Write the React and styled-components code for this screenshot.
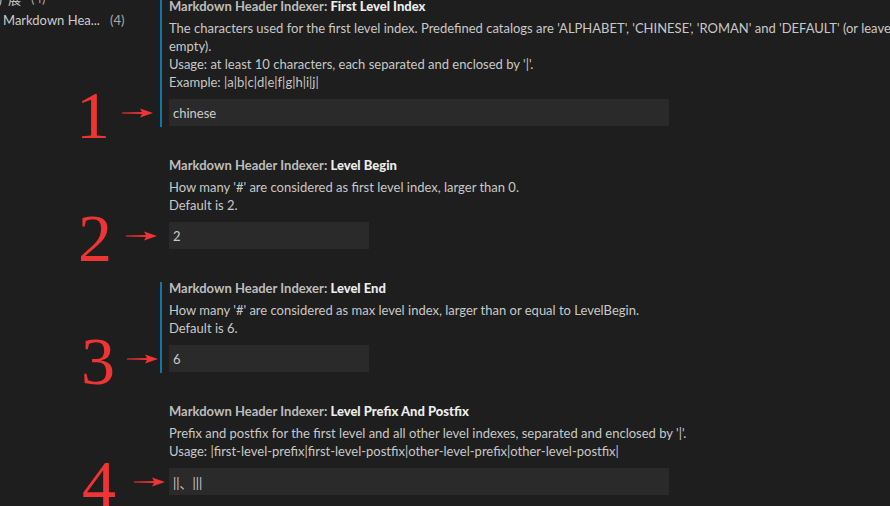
import styled, { createGlobalStyle } from "styled-components"

const GlobalStyle = createGlobalStyle`
    html, body {
        margin: 0;
        padding: 0;
        background: #1e1e1e;
        overflow: hidden;
    }
`

const Page = styled.div`
    display: flex;
    width: 890px;
    height: 506px;
    overflow: hidden;
    background: #1e1e1e;
    font-family: Lato, "Noto Sans", "Noto Sans CJK SC", sans-serif;
    font-size: 13px;
    color: #cccccc;
`

const Sidebar = styled.nav`
    display: flex;
    flex-direction: column;
    width: 160px;
    flex-shrink: 0;
    margin-top: -13px;
    overflow: hidden;
`

const TocItem = styled.div`
    display: flex;
    align-items: center;
    height: 22px;
    margin-left: ${p => p.$indent}px;
    color: #cccccc;
    white-space: nowrap;
`

const TocCount = styled.span`
    margin-left: 10px;
    color: #a8a8a8;
`

const Main = styled.main`
    display: flex;
    flex-direction: column;
    gap: 32px;
    flex: 1;
    min-width: 0;
`

const Setting = styled.section`
    display: flex;
    flex-direction: column;
    padding: 0 0 1px 7px;
    border-left: 2px solid ${p => (p.$active ? "#0f77b0" : "transparent")};
`

const Title = styled.div`
    height: 12px;
    line-height: 13px;
    font-weight: 700;
    color: #bdbdbd;
    white-space: nowrap;

    b {
        font-weight: 900;
        color: #ececec;
    }
`

const Description = styled.div`
    margin-top: 6px;
    line-height: 18px;
    padding-top: 1px;
    margin-bottom: -1px;
    color: #c8c8c8;
    white-space: nowrap;
`

const InputRow = styled.div`
    position: relative;
    margin-top: 9px;
`

const Input = styled.div`
    width: ${p => p.$width}px;
    height: 27px;
    box-sizing: border-box;
    padding: 1px 0 0 4px;
    display: flex;
    align-items: center;
    background: #2a2a2a;
    color: #cccccc;
    white-space: nowrap;
`

// red hand-drawn callouts laid over the screenshot
const Callout = styled.div`
    position: absolute;
    top: 50%;
    right: calc(100% + ${p => p.$offset}px);
    display: flex;
    align-items: center;
    gap: ${p => p.$gap}px;
    transform: translateY(-50%);
    pointer-events: none;
`

const Digit = styled.span`
    font-family: "Liberation Serif", serif;
    font-size: 68px;
    line-height: 1;
    color: #ef3434;
    margin-top: 4px;
`

function Arrow() {
    return (
        <svg width="31" height="12" viewBox="0 0 31 12">
            <path d="M0 5.4 L21 5 L21 7 L0 6.4 Z" fill="#ef3434" />
            <path d="M18 1.5 L31 6 L18 10.5 L20.5 6 Z" fill="#ef3434" />
        </svg>
    )
}

const settings = [
    {
        key: "First Level Index",
        lines: [
            "The characters used for the first level index. Predefined catalogs are 'ALPHABET', 'CHINESE', 'ROMAN' and 'DEFAULT' (or leave",
            "empty).",
            "Usage: at least 10 characters, each separated and enclosed by '|'.",
            "Example: |a|b|c|d|e|f|g|h|i|j|",
        ],
        value: "chinese",
        width: 500,
        active: true,
        num: "1",
        gap: 12,
        offset: 16,
    },
    {
        key: "Level Begin",
        lines: [
            "How many '#' are considered as first level index, larger than 0.",
            "Default is 2.",
        ],
        value: "2",
        width: 200,
        num: "2",
        gap: 14,
        offset: 12,
    },
    {
        key: "Level End",
        lines: [
            "How many '#' are considered as max level index, larger than or equal to LevelBegin.",
            "Default is 6.",
        ],
        value: "6",
        width: 200,
        active: true,
        num: "3",
        gap: 12,
        offset: 11,
    },
    {
        key: "Level Prefix And Postfix",
        lines: [
            "Prefix and postfix for the first level and all other level indexes, separated and enclosed by '|'.",
            "Usage: |first-level-prefix|first-level-postfix|other-level-prefix|other-level-postfix|",
        ],
        value: "||、|||",
        width: 500,
        num: "4",
        gap: 18,
        offset: 4,
    },
]

export default function App() {
    return (
        <Page>
            <GlobalStyle />
            <Sidebar>
                <TocItem $indent={-12}>› 扩展<TocCount>(4)</TocCount></TocItem>
                <TocItem $indent={3}>Markdown Hea...<TocCount>(4)</TocCount></TocItem>
            </Sidebar>
            <Main>
                {settings.map(s => (
                    <Setting key={s.key} $active={s.active}>
                        <Title>Markdown Header Indexer: <b>{s.key}</b></Title>
                        <Description>
                            {s.lines.map(l => <div key={l}>{l}</div>)}
                        </Description>
                        <InputRow>
                            <Callout $gap={s.gap} $offset={s.offset}>
                                <Digit>{s.num}</Digit>
                                <Arrow />
                            </Callout>
                            <Input $width={s.width}>{s.value}</Input>
                        </InputRow>
                    </Setting>
                ))}
            </Main>
        </Page>
    )
}
